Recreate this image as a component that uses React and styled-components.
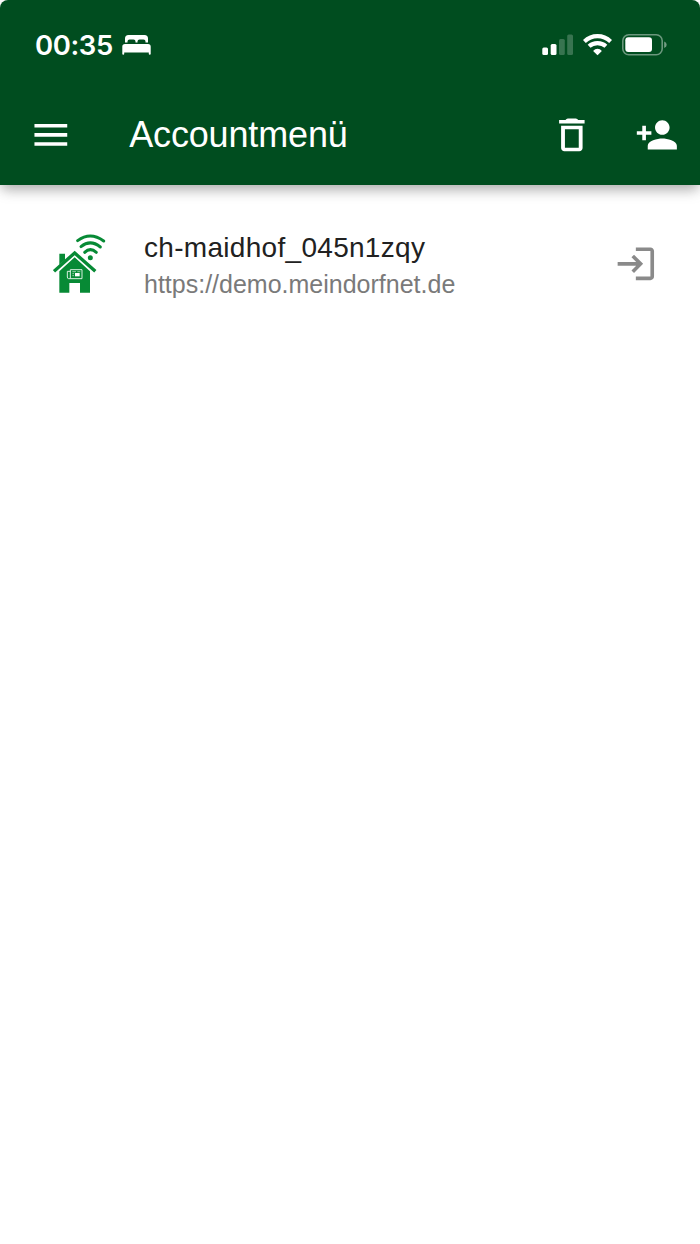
import React from 'react';
import styled, { createGlobalStyle } from 'styled-components';

const GlobalStyle = createGlobalStyle`
  * { box-sizing: border-box; }
  body { margin: 0; background: #fff; }
`;

const Screen = styled.div`
  min-height: 1244px;
  display: flex;
  flex-direction: column;
  background: #fff;
  font-family: 'Liberation Sans', Arial, sans-serif;
`;

const Header = styled.header`
  height: 185px;
  background: #004d1f;
  color: #fff;
  border-radius: 8px 8px 0 0;
  box-shadow: 0 6px 12px -2px rgba(0, 0, 0, 0.22), 0 6px 16px -1px rgba(0, 0, 0, 0.14);
`;

const StatusBar = styled.div`
  height: 84px;
  padding: 5px 33px 0 35px;
  display: flex;
  align-items: center;
`;

const Clock = styled.time`
  font: 600 27.5px/34px Inter, 'Liberation Sans', sans-serif;
  letter-spacing: -0.4px;
  width: 87px;
  white-space: nowrap;
`;

const StatusIcons = styled.div`
  margin-left: auto;
  display: flex;
  align-items: center;
  gap: 10px;
`;

const Toolbar = styled.div`
  height: 101px;
  padding: 0 21px 0 28.5px;
  display: flex;
  align-items: center;
`;

const Title = styled.h1`
  flex: 1;
  margin: 0 0 0 57px;
  font-size: 36px;
  line-height: 44px;
  font-weight: 400;
  letter-spacing: -0.15px;
`;

const IconButton = styled.button`
  display: flex;
  padding: 0;
  border: 0;
  background: none;
  color: ${(p) => p.$color || '#fff'};
  margin-left: ${(p) => p.$gap || 0}px;
`;

const AccountRow = styled.section`
  margin-top: 37px;
  height: 84px;
  padding: 0 42px 0 53px;
  display: flex;
  align-items: center;
`;

const AccountText = styled.div`
  flex: 1;
  margin-left: 38px;
  padding-top: 2px;
`;

const AccountName = styled.div`
  font-size: 28px;
  line-height: 38px;
  letter-spacing: 0.3px;
  color: #212121;
`;

const AccountUrl = styled.div`
  font-size: 25px;
  line-height: 34px;
  color: #7a7a7a;
`;

const MaterialIcon = ({ d }) => (
  <svg width="43.7" height="43.7" viewBox="0 0 24 24" fill="currentColor">
    <path d={d} fillRule="evenodd" />
  </svg>
);

const icons = {
  menu: 'M3 18h18v-2H3v2zm0-5h18v-2H3v2zm0-7v2h18V6H3z',
  trash:
    'M6.100 19.200c0 1 .8 1.800 1.800 1.800h8.200c1 0 1.800-.8 1.800-1.800V7H6.100v12.200zM8.200 8.900h7.600v10.200H8.200V8.900zM15.500 3.900Q15 3 14.200 3H9.800Q9 3 8.500 3.900H5v1.900h14V3.900z',
  personAdd:
    'M15 12c2.21 0 4-1.79 4-4s-1.79-4-4-4-4 1.79-4 4 1.79 4 4 4zm-9-2V7H4v3H1v2h3v3h2v-3h3v-2H6zm9 4c-2.67 0-8 1.34-8 4v2h16v-2c0-2.66-5.33-4-8-4z',
  login:
    'M11 7L9.6 8.4l2.6 2.6H2v2h10.2l-2.6 2.6L11 17l5-5-5-5zm9 12h-8v2h8c1.1 0 2-.9 2-2V5c0-1.1-.9-2-2-2h-8v2h8v14z',
};

const Bed = () => (
  <svg width="29" height="20" viewBox="0 0 29 20" fill="#fff">
    <path d="M3 7.500V3.500Q3 0 6.500 0H22.500Q26 0 26 3.500V7.500H23.500V6.500Q23.500 4.500 21.500 4.500H17.500Q15.500 4.500 15.500 6.500V7.500H13.500V6.500Q13.500 4.500 11.500 4.500H7.500Q5.500 4.500 5.500 6.500V7.500Z" />
    <path d="M0.300 19V11.500Q0.300 9 3 9H26Q28.700 9 28.700 11.500V19Q28.700 19.800 27.700 19.800Q26.800 19.800 26.800 19V17.500H2.200V19Q2.200 19.800 1.300 19.800Q0.300 19.800 0.300 19Z" />
  </svg>
);

const Signal = () => (
  <svg width="31" height="22" viewBox="0 0 31 22" fill="#fff">
    <rect x="0.300" y="13.500" width="5.700" height="7.500" rx="1.500" />
    <rect x="8.700" y="10" width="5.800" height="11" rx="1.500" />
    <rect x="17" y="5" width="5.800" height="16" rx="1.500" opacity=".22" />
    <rect x="25.200" y="0.500" width="5.800" height="20.500" rx="1.500" opacity=".22" />
  </svg>
);

const Wifi = () => (
  <svg width="29" height="22" viewBox="0 0 29 22" fill="none" stroke="#fff" strokeWidth="4.100">
    <path d="M1.400 7.400Q7 2.100 14.500 2.100T27.600 7.400" />
    <path d="M6.100 12.300Q9.500 9.100 14.500 9.100T22.900 12.300" />
    <path d="M14.500 21.300L10.100 16.900Q12 14.800 14.500 14.800T18.900 16.900Z" fill="#fff" stroke="none" />
  </svg>
);

const Battery = () => (
  <svg width="45" height="22" viewBox="0 0 45 22">
    <rect x="0.800" y="0.800" width="39.400" height="20" rx="6" fill="none" stroke="#fff" strokeOpacity=".42" strokeWidth="1.600" />
    <rect x="3.300" y="3.300" width="26.700" height="14.800" rx="3" fill="#fff" />
    <path d="M42.200 7.500Q44.700 8.500 44.700 10.800T42.200 14.100Z" fill="#fff" opacity=".45" />
  </svg>
);

const HouseLogo = () => (
  <svg width="53" height="60" viewBox="39 41 159 180" fill="#078a35">
    <path d="M58 138V100H75V120L66 132Z" />
    <path d="M58 153L104 111L150 153V217H120V188H88V217H58Z" />
    <path d="M42 155L104 101L166 155" fill="none" stroke="#fff" strokeWidth="12" />
    <path d="M42 153L104 98L166 153" fill="none" stroke="#078a35" strokeWidth="10" />
    <g fill="none" stroke="#078a35" strokeWidth="9" strokeLinecap="round">
      <path d="M113 61Q151 33 191 62" />
      <path d="M123 79Q151 56 181 80" />
      <path d="M134 96Q151 80 169 96" />
    </g>
    <circle cx="151" cy="112" r="7.500" />
    <g fill="none" stroke="#d9f0e0" strokeWidth="3">
      <path d="M91 148H126V175H86Q82 175 82 170V153H91V175M91 148V155" />
      <path d="M97 154H108M97 160H102M97 166H102M112 154H121" strokeWidth="2" />
    </g>
    <rect x="105" y="158" width="14" height="10" fill="#fff" />
  </svg>
);

export default function App() {
  return (
    <Screen>
      <GlobalStyle />
      <Header>
        <StatusBar>
          <Clock>00:35</Clock>
          <Bed />
          <StatusIcons>
            <Signal />
            <Wifi />
            <Battery />
          </StatusIcons>
        </StatusBar>
        <Toolbar>
          <IconButton aria-label="Menü">
            <MaterialIcon d={icons.menu} />
          </IconButton>
          <Title>Accountmenü</Title>
          <IconButton aria-label="Löschen">
            <MaterialIcon d={icons.trash} />
          </IconButton>
          <IconButton aria-label="Account hinzufügen" $gap={42}>
            <MaterialIcon d={icons.personAdd} />
          </IconButton>
        </Toolbar>
      </Header>
      <AccountRow>
        <HouseLogo />
        <AccountText>
          <AccountName>ch-maidhof_045n1zqy</AccountName>
          <AccountUrl>https://demo.meindorfnet.de</AccountUrl>
        </AccountText>
        <IconButton aria-label="Anmelden" $color="#8a8a8a">
          <MaterialIcon d={icons.login} />
        </IconButton>
      </AccountRow>
    </Screen>
  );
}
